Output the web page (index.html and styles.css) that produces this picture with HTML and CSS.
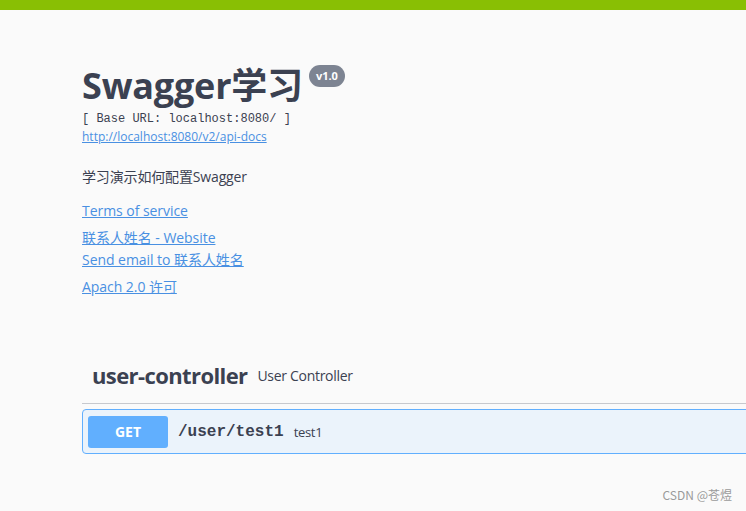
FILE: index.html
```html
<!DOCTYPE html>
<html lang="zh">
<head>
<meta charset="utf-8">
<title>Swagger UI</title>
<link rel="stylesheet" href="styles.css">
</head>
<body>
<div class="topbar"></div>
<div class="page">
  <div class="info">
    <div class="title-row">
      <h1 class="title">Swagger学习</h1>
      <span class="version">v1.0</span>
    </div>
    <div class="base-url">[ Base URL: localhost:8080/ ]</div>
    <a class="doc-link" href="#">http://localhost:8080/v2/api-docs</a>
    <p class="desc">学习演示如何配置Swagger</p>
    <a class="link terms" href="#">Terms of service</a>
    <div class="contact">
      <a class="link" href="#">联系人姓名 - Website</a>
      <a class="link" href="#">Send email to 联系人姓名</a>
    </div>
    <a class="link license" href="#">Apach 2.0 许可</a>
  </div>

  <div class="tag">
    <h3 class="tag-name">user-controller</h3>
    <span class="tag-desc">User Controller</span>
  </div>
  <div class="opblock">
    <span class="method">GET</span>
    <span class="path">/user/test1</span>
    <span class="summary">test1</span>
  </div>
</div>
<div class="watermark">CSDN @苍煜</div>
</body>
</html>
```

FILE: styles.css
```css
html, body {
  margin: 0;
  padding: 0;
}
body {
  background: #fafafa;
  width: 746px;
  height: 511px;
  overflow: hidden;
  position: relative;
  font-family: "Open Sans", "Noto Sans CJK SC", sans-serif;
  color: #3b4151;
}
.topbar {
  height: 10px;
  background: #89bf04;
}
.page {
  padding-left: 82px;
  width: 720px;
}
.info {
  padding-top: 52px;
}
.title-row {
  display: flex;
  align-items: flex-start;
}
.title {
  margin: 0;
  font-size: 36px;
  font-weight: 700;
  line-height: 48px;
  letter-spacing: -0.2px;
  color: #3b4151;
}
.version {
  margin-top: 3px;
  margin-left: 6px;
  background: #7d8492;
  color: #fff;
  font-size: 11px;
  font-weight: 700;
  border-radius: 11px;
  padding: 0 7px;
  height: 22px;
  line-height: 22px;
  font-family: "Open Sans", sans-serif;
}
.base-url {
  font-family: "Liberation Mono", monospace;
  font-size: 12px;
  line-height: 16px;
  color: #3b4151;
  margin-top: 1px;
}
.doc-link {
  display: block;
  font-size: 12px;
  line-height: 20px;
  color: #4990e2;
  text-decoration: underline;
  letter-spacing: 0;
}
.desc {
  margin: 20px 0 0;
  font-size: 14px;
  line-height: 20px;
  letter-spacing: -0.15px;
}
.link {
  display: block;
  font-size: 14px;
  line-height: 22px;
  color: #4990e2;
  text-decoration: underline;
  letter-spacing: -0.05px;
}
.terms {
  margin-top: 13px;
}
.contact {
  margin-top: 5px;
}
.license {
  margin-top: 5px;
}
.tag {
  display: flex;
  align-items: center;
  margin-top: 63px;
  padding: 0 0 14px 10px;
  border-bottom: 1px solid #c7c9ce;
  width: 700px;
}
.tag-name {
  margin: 0;
  font-size: 22px;
  font-weight: 700;
  line-height: 28px;
  letter-spacing: -0.6px;
}
.tag-desc {
  margin-left: 10px;
  font-size: 14px;
  letter-spacing: -0.3px;
}
.opblock {
  margin-top: 5px;
  display: flex;
  align-items: center;
  height: 45px;
  padding-left: 5px;
  border: 1px solid #61affe;
  border-radius: 4px;
  background: #ebf3fb;
  width: 700px;
  box-sizing: border-box;
}
.method {
  width: 80px;
  height: 32px;
  line-height: 32px;
  text-align: center;
  background: #61affe;
  color: #fff;
  font-weight: 700;
  font-size: 14px;
  border-radius: 3px;
}
.path {
  margin-left: 10px;
  font-family: "Liberation Mono", monospace;
  font-size: 16px;
  font-weight: 700;
  color: #3b4151;
}
.summary {
  margin-left: 10px;
  font-size: 13px;
  letter-spacing: -0.3px;
}
.watermark {
  position: absolute;
  right: 14px;
  bottom: 8px;
  font-size: 12px;
  color: #9a9a9a;
  font-family: "Noto Sans CJK SC", sans-serif;
}
```
